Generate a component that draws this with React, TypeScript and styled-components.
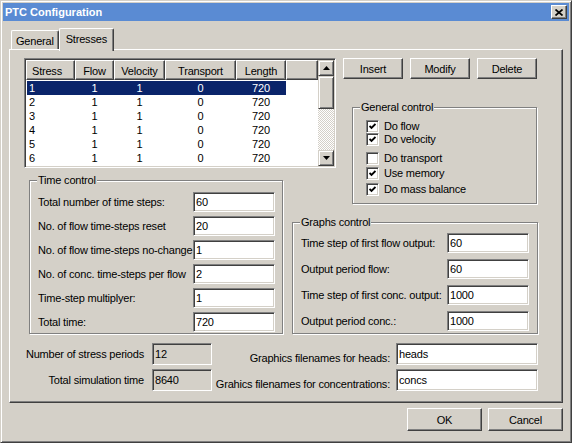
import React from 'react'
import styled, { createGlobalStyle } from 'styled-components'

const GlobalStyle = createGlobalStyle`
  * { box-sizing: border-box; }
  html, body { margin: 0; padding: 0; background: #d4d0c8; }
  body {
    font-family: "Liberation Sans", Arial, sans-serif;
    font-size: 11px;
    color: #000;
  }
`

const stresses = [1, 2, 3, 4, 5, 6].map((n) => ({
  stress: n,
  flow: 1,
  velocity: 1,
  transport: 0,
  length: 720,
}))

const columns = [
  { key: 'stress', title: 'Stress', width: 49 },
  { key: 'flow', title: 'Flow', width: 39 },
  { key: 'velocity', title: 'Velocity', width: 51 },
  { key: 'transport', title: 'Transport', width: 71 },
  { key: 'length', title: 'Length', width: 50 },
] as const

const timeFields = [
  ['Total number of time steps:', '60'],
  ['No. of flow time-steps reset', '20'],
  ['No. of flow time-steps no-change', '1'],
  ['No. of conc. time-steps per flow', '2'],
  ['Time-step multiplyer:', '1'],
  ['Total time:', '720'],
]

const graphFields = [
  ['Time step of first flow output:', '60'],
  ['Output period flow:', '60'],
  ['Time step of first conc. output:', '1000'],
  ['Output period conc.:', '1000'],
]

const checks = [
  { label: 'Do flow', checked: true, mt: 6 },
  { label: 'Do velocity', checked: true, mt: 0 },
  { label: 'Do transport', checked: false, mt: 6 },
  { label: 'Use memory', checked: true, mt: 2 },
  { label: 'Do mass balance', checked: true, mt: 3 },
]

const App = () => {
  return (
    <>
      <GlobalStyle />
      <Window>
        <TitleBar>
          <Title>PTC Configuration</Title>
          <CloseButton>
            <svg width="8" height="7" viewBox="0 0 8 7">
              <path d="M0.5 0.5 L7.5 6.5 M7.5 0.5 L0.5 6.5" stroke="#000" strokeWidth="1.7" fill="none" />
            </svg>
          </CloseButton>
        </TitleBar>
        <Body>
          <TabRow>
            <Tab>General</Tab>
            <Tab $active>Stresses</Tab>
          </TabRow>
          <Panel>
            <Layout>
              <ListFrame>
                <ListArea>
                  <HeaderRow>
                    {columns.map((c) => (
                      <HeaderCell key={c.key} $w={c.width} $left={c.key === 'stress'}>
                        {c.title}
                      </HeaderCell>
                    ))}
                    <HeaderFiller />
                  </HeaderRow>
                  <Rows>
                    {stresses.map((s, i) => (
                      <Row key={s.stress} $selected={i === 0}>
                        {columns.map((c, ci) => (
                          <Cell key={c.key} $w={ci === 0 ? c.width - 1 : c.width} $left={ci === 0}>
                            {s[c.key]}
                          </Cell>
                        ))}
                      </Row>
                    ))}
                  </Rows>
                </ListArea>
                <ScrollBar>
                  <ScrollButton>
                    <svg width="7" height="4" viewBox="0 0 7 4">
                      <path d="M3.5 0 L7 4 L0 4 Z" fill="#000" />
                    </svg>
                  </ScrollButton>
                  <Thumb />
                  <Track />
                  <ScrollButton>
                    <svg width="7" height="4" viewBox="0 0 7 4">
                      <path d="M0 0 L7 0 L3.5 4 Z" fill="#000" />
                    </svg>
                  </ScrollButton>
                </ScrollBar>
              </ListFrame>

              <Side>
                <ButtonRow>
                  <Button $w={60} $h={21}>Insert</Button>
                  <Button $w={60} $h={21}>Modify</Button>
                  <Button $w={60} $h={21}>Delete</Button>
                </ButtonRow>
                <GeneralGroup>
                  <Caption>General control</Caption>
                  <CheckList>
                    {checks.map((c) => (
                      <CheckRow key={c.label} $mt={c.mt}>
                        <CheckBox>
                          {c.checked && (
                            <svg width="7" height="7" viewBox="0 0 7 7">
                              <path d="M0.5 3 L2.5 5 L6.5 1" stroke="#000" strokeWidth="1.9" fill="none" />
                            </svg>
                          )}
                        </CheckBox>
                        <span>{c.label}</span>
                      </CheckRow>
                    ))}
                  </CheckList>
                </GeneralGroup>
              </Side>

              <TimeGroup>
                <Caption>Time control</Caption>
                <FieldList $gap={4} $top={5} $left={8} $right={7}>
                  {timeFields.map(([label, value]) => (
                    <FieldRow key={label} $label={155}>
                      <FieldLabel>{label}</FieldLabel>
                      <TextBox readOnly value={value} />
                    </FieldRow>
                  ))}
                </FieldList>
              </TimeGroup>

              <GraphsGroup>
                <Caption>Graphs control</Caption>
                <FieldList $gap={6} $top={4} $left={8} $right={8}>
                  {graphFields.map(([label, value]) => (
                    <FieldRow key={label} $label={146}>
                      <FieldLabel>{label}</FieldLabel>
                      <TextBox readOnly value={value} />
                    </FieldRow>
                  ))}
                </FieldList>
              </GraphsGroup>
            </Layout>

            <Summary>
              <SummaryLabel>Number of stress periods</SummaryLabel>
              <TextBox readOnly value="12" $disabled />
              <SummaryLabel $bottom>Graphics filenames for heads:</SummaryLabel>
              <TextBox readOnly value="heads" />
              <SummaryLabel>Total simulation time</SummaryLabel>
              <TextBox readOnly value="8640" $disabled />
              <SummaryLabel $bottom>Grahics filenames for concentrations:</SummaryLabel>
              <TextBox readOnly value="concs" />
            </Summary>
          </Panel>
          <Footer>
            <Button $w={75} $h={23}>OK</Button>
            <Button $w={75} $h={23}>Cancel</Button>
          </Footer>
        </Body>
      </Window>
    </>
  )
}

const raised = `
  border: 1px solid;
  border-color: #fff #404040 #404040 #fff;
  box-shadow: inset -1px -1px #808080;
  background: #d4d0c8;
`

const sunken = `
  border: 1px solid;
  border-color: #808080 #fff #fff #808080;
  box-shadow: inset 1px 1px #404040, inset -1px -1px #d4d0c8;
`

const Window = styled.div`
  width: 572px;
  height: 443px;
  display: flex;
  flex-direction: column;
  padding: 2px;
  background: #d4d0c8;
  border: 1px solid;
  border-color: #d4d0c8 #404040 #404040 #d4d0c8;
  box-shadow: inset 1px 1px #fff, inset -1px -1px #808080;
`

const TitleBar = styled.div`
  height: 18px;
  flex: none;
  display: flex;
  align-items: center;
  justify-content: space-between;
  padding: 0 2px;
  background: #5a8bd3;
`

const Title = styled.span`
  color: #fff;
  font-weight: bold;
  font-size: 11px;
`

const CloseButton = styled.div`
  ${raised}
  width: 16px;
  height: 14px;
  display: flex;
  align-items: center;
  justify-content: center;
`

const Body = styled.div`
  flex: 1;
  display: flex;
  flex-direction: column;
  padding: 7px 6px 0 6px;
  letter-spacing: -0.2px;
`

const TabRow = styled.div`
  height: 21px;
  display: flex;
  align-items: flex-end;
  padding-left: 2px;
`

const Tab = styled.div<{ $active?: boolean }>`
  position: relative;
  z-index: ${(p) => (p.$active ? 1 : 0)};
  height: ${(p) => (p.$active ? 23 : 19)}px;
  margin-bottom: ${(p) => (p.$active ? -2 : 0)}px;
  padding: ${(p) => (p.$active ? 4 : 4)}px ${(p) => (p.$active ? 6 : 4)}px 0;
  line-height: 13px;
  background: #d4d0c8;
  border-top: 1px solid #fff;
  border-left: 1px solid #fff;
  border-right: 1px solid #404040;
  border-radius: 2px 2px 0 0;
  box-shadow: inset -1px 0 #808080;
`

const Panel = styled.div`
  height: 354px;
  flex: none;
  padding: 8px 0 0 14px;
  border: 1px solid;
  border-color: #fff #404040 #404040 #fff;
  box-shadow: inset -1px -1px #808080;
`

const Layout = styled.div`
  display: grid;
  grid-template-columns: 268px 44px 202px;
  grid-template-rows: 122px 42px 112px;
  grid-template-areas:
    'list list side'
    'time . side'
    'time graphs graphs';
`

const ListFrame = styled.div`
  ${sunken}
  grid-area: list;
  align-self: start;
  width: 312px;
  height: 110px;
  padding: 1px;
  display: flex;
  background: #fff;
`

const ListArea = styled.div`
  flex: 1;
  display: flex;
  flex-direction: column;
  background: #fff;
`

const HeaderRow = styled.div`
  height: 20px;
  display: flex;
`

const HeaderCell = styled.div<{ $w: number; $left?: boolean }>`
  ${raised}
  width: ${(p) => p.$w}px;
  display: flex;
  align-items: center;
  justify-content: ${(p) => (p.$left ? 'flex-start' : 'center')};
  padding-left: ${(p) => (p.$left ? 5 : 0)}px;
  padding-top: 2px;
`

const HeaderFiller = styled.div`
  ${raised}
  flex: 1;
`

const Rows = styled.div`
  padding-top: 1px;
`

const Row = styled.div<{ $selected?: boolean }>`
  height: 14px;
  width: 259px;
  margin-left: 1px;
  display: flex;
  align-items: center;
  background: ${(p) => (p.$selected ? '#0a246a' : 'transparent')};
  color: ${(p) => (p.$selected ? '#fff' : '#000')};
`

const Cell = styled.div<{ $w: number; $left?: boolean }>`
  width: ${(p) => p.$w}px;
  text-align: ${(p) => (p.$left ? 'left' : 'center')};
  padding-left: ${(p) => (p.$left ? 2 : 0)}px;
`

const ScrollBar = styled.div`
  width: 16px;
  display: flex;
  flex-direction: column;
`

const scrollPart = `
  border: 1px solid;
  border-color: #d4d0c8 #404040 #404040 #d4d0c8;
  box-shadow: inset 1px 1px #fff, inset -1px -1px #808080;
  background: #d4d0c8;
`

const ScrollButton = styled.div`
  ${scrollPart}
  height: 16px;
  flex: none;
  display: flex;
  align-items: center;
  justify-content: center;
`

const Thumb = styled.div`
  ${scrollPart}
  height: 33px;
  flex: none;
`

const Track = styled.div`
  flex: 1;
  background-color: #fff;
  background-image: conic-gradient(#d4d0c8 25%, #fff 0 50%, #d4d0c8 0 75%, #fff 0);
  background-size: 2px 2px;
`

const Side = styled.div`
  grid-area: side;
  display: flex;
  flex-direction: column;
`

const ButtonRow = styled.div`
  display: flex;
  gap: 7px;
  margin-left: 7px;
`

const Button = styled.div<{ $w: number; $h: number }>`
  ${raised}
  width: ${(p) => p.$w}px;
  height: ${(p) => p.$h}px;
  display: flex;
  align-items: center;
  justify-content: center;
`

const Group = styled.div`
  border: 1px solid #808080;
  box-shadow: inset 1px 1px #fff, 1px 1px #fff;
  display: flex;
  flex-direction: column;
`

const Caption = styled.div`
  width: fit-content;
  margin: -7px 0 0 7px;
  padding: 0 1px;
  line-height: 13px;
  background: #d4d0c8;
`

const GeneralGroup = styled(Group)`
  width: 185px;
  height: 97px;
  margin: 28px 0 0 16px;
`

const CheckList = styled.div`
  display: flex;
  flex-direction: column;
  padding-left: 13px;
`

const CheckRow = styled.div<{ $mt: number }>`
  height: 13px;
  margin-top: ${(p) => p.$mt}px;
  display: flex;
  align-items: center;
  gap: 5px;
  line-height: 13px;
`

const CheckBox = styled.div`
  ${sunken}
  width: 13px;
  height: 13px;
  background: #fff;
  display: flex;
  align-items: center;
  justify-content: center;
`

const TimeGroup = styled(Group)`
  grid-area: time;
  width: 254px;
  height: 154px;
  margin-left: 5px;
`

const GraphsGroup = styled(Group)`
  grid-area: graphs;
  width: 246px;
  height: 112px;
`

const FieldList = styled.div<{ $gap: number; $top: number; $left: number; $right: number }>`
  display: flex;
  flex-direction: column;
  gap: ${(p) => p.$gap}px;
  padding: ${(p) => p.$top}px ${(p) => p.$right}px 0 ${(p) => p.$left}px;
`

const FieldRow = styled.div<{ $label: number }>`
  display: grid;
  grid-template-columns: ${(p) => p.$label}px 82px;
  align-items: center;
  height: 20px;
`

const FieldLabel = styled.span`
  white-space: nowrap;
`

const TextBox = styled.input<{ $disabled?: boolean }>`
  ${sunken}
  font: inherit;
  letter-spacing: inherit;
  color: #000;
  height: 100%;
  width: 100%;
  padding: 0 2px;
  outline: none;
  background: ${(p) => (p.$disabled ? '#d4d0c8' : '#fff')};
`

const Summary = styled.div`
  display: grid;
  grid-template-columns: 128px 60px 184px 142px;
  grid-template-rows: 22px 22px;
  row-gap: 4px;
  margin-top: 9px;
`

const SummaryLabel = styled.span<{ $bottom?: boolean }>`
  white-space: nowrap;
  text-align: right;
  line-height: 13px;
  padding-right: ${(p) => (p.$bottom ? 6 : 8)}px;
  align-self: ${(p) => (p.$bottom ? 'end' : 'center')};
`

const Footer = styled.div`
  display: flex;
  justify-content: flex-end;
  gap: 6px;
  margin-top: 5px;
`

export default App
